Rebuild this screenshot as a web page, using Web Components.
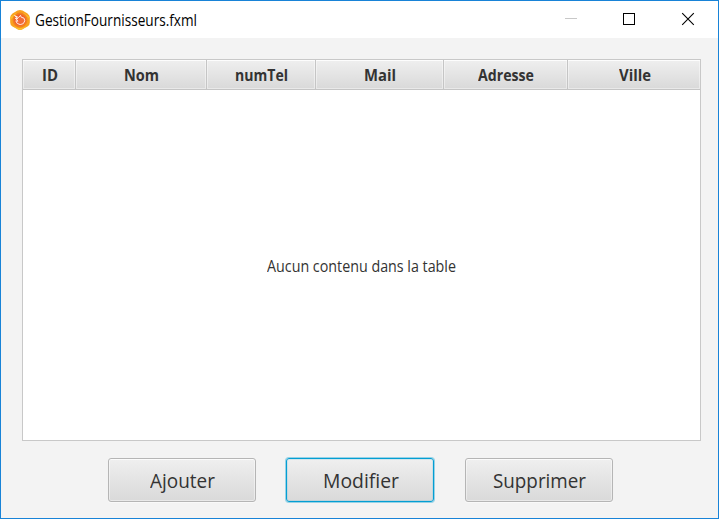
<!DOCTYPE html>
<html lang="fr">
<head>
<meta charset="utf-8">
<title>GestionFournisseurs.fxml</title>
<style>
html, body { margin: 0; height: 100%; overflow: hidden; }
body { font-family: "Open Sans", "Noto Sans", "Liberation Sans", sans-serif; font-size: 15px; color: #333; }
</style>
</head>
<body>
<app-window caption="GestionFournisseurs.fxml">
  <data-table placeholder="Aucun contenu dans la table">
    <table-column style="--w:53px" label="ID" fit="16"></table-column>
    <table-column style="--w:131px" label="Nom" fit="35"></table-column>
    <table-column style="--w:109px" label="numTel" fit="53"></table-column>
    <table-column style="--w:128px" label="Mail" fit="32"></table-column>
    <table-column style="--w:124px" label="Adresse" fit="56"></table-column>
    <table-column style="--w:132px" label="Ville" fit="32"></table-column>
  </data-table>
  <action-bar slot="actions">
    <push-button label="Ajouter" fit="65"></push-button>
    <push-button label="Modifier" fit="76" focused></push-button>
    <push-button label="Supprimer" fit="93"></push-button>
  </action-bar>
</app-window>
<script>
function define(name, html, ready) {
  customElements.define(name, class extends HTMLElement {
    connectedCallback() {
      if (this.shadowRoot) return;
      this.attachShadow({ mode: "open" }).innerHTML = html(this);
      if (ready) ready(this);
    }
  });
}

// Label whose glyphs are condensed to a given advance width.
define("fit-label", () => `<style>
:host { display: block; white-space: nowrap; }
span { display: inline-block; transform-origin: 0 50%; }
</style><span></span>`, el => {
  const span = el.shadowRoot.querySelector("span");
  span.textContent = el.getAttribute("text");
  const target = +el.getAttribute("width");
  const natural = span.getBoundingClientRect().width;
  el.style.width = target + "px";
  span.style.transform = `scaleX(${target / natural})`;
});

define("app-icon", () => `<style>:host { display: block; width: 20px; height: 20px; } svg { display: block; }</style>
<svg width="20" height="20" viewBox="0 0 20 20">
<path d="M7.5.6Q10-.6 12.5.6L17.5 3.6Q20 5.5 19.8 8V12Q20 15 17.5 16.6L12.5 19.3Q10 20.5 7.5 19.3L2.5 16.6Q0 15 .2 12V8Q0 5.5 2.5 3.6Z" fill="#f9a11d"/>
<path d="M.4 7L6 3L14 3L19.6 7V9L15 5H5L.4 10ZM3 16L8 18H12L17 16L12 19.4Q10 20.3 8 19.4Z" fill="#fbbd28"/>
<circle cx="10" cy="10" r="7.4" fill="#f4801f"/><circle cx="10" cy="10" r="5.8" fill="#f0602a"/>
<path d="M4.5 5.5L8.5 7.5L10.5 5.3L11.2 7.2Q15 7.3 14.8 10.8Q14 14.7 10.2 14.6Q6.3 14.2 5.8 10.8L8 11.2L5.2 8.2L8 8.8Z" fill="#f26a38" stroke="#ffe9df" stroke-width="1" stroke-linejoin="round"/>
</svg>`);

define("window-controls", () => `<style>
:host { display: flex; }
svg { display: block; }
</style>
<svg width="58" height="37" viewBox="0 0 58 37"><path d="M23 17.5h12" stroke="#c8c8c8"/></svg>
<svg width="58" height="37" viewBox="0 0 58 37"><rect x="23.5" y="12.5" width="11" height="11" fill="none" stroke="#000"/></svg>
<svg width="60" height="37" viewBox="0 0 60 37"><path d="M24.2 12.2L35.8 23.8M35.8 12.2L24.2 23.8" fill="none" stroke="#000" stroke-width="1.1"/></svg>`);

define("app-window", el => `<style>
:host { display: flex; flex-direction: column; box-sizing: border-box; width: 719px; height: 519px; border: 1px solid #1883d7; background: #f3f3f3; }
header { display: flex; align-items: center; height: 37px; flex: none; background: #fff; color: #000; padding-left: 9px; box-sizing: border-box; }
fit-label { margin-left: 5px; margin-right: auto; padding-top: 1px; font-size: 15.5px; }
main { padding: 21px 17px 0 21px; }
footer { padding: 17px 0 0 107px; }
</style>
<header><app-icon></app-icon><fit-label text="${el.getAttribute("caption")}" width="162"></fit-label><window-controls></window-controls></header>
<main><slot></slot></main><footer><slot name="actions"></slot></footer>`);

define("table-column", el => `<style>
:host { display: flex; justify-content: center; align-items: center; box-sizing: border-box; width: var(--w); height: 29px; font-weight: 700; font-size: 15.5px; padding-top: 1px; padding-left: 1px;
  border-right: 1px solid #c5c5c5; background: linear-gradient(#efefef, #d9d9d9); box-shadow: inset 0 0 0 1px rgba(255,255,255,.42), inset 0 1px #fbfbfb; }
:host(:last-child) { border-right: 0; }
</style><fit-label text="${el.getAttribute("label")}" width="${el.getAttribute("fit")}"></fit-label>`);

define("data-table", el => `<style>
:host { display: flex; flex-direction: column; box-sizing: border-box; width: 679px; height: 382px; border: 1px solid #c8c8c8; background: #fff; }
.head { display: flex; border-bottom: 1px solid #c5c5c5; }
.body { flex: 1; display: flex; align-items: center; justify-content: center; font-size: 15.5px; padding-top: 2px; }
</style><div class="head"><slot></slot></div>
<div class="body"><fit-label text="${el.getAttribute("placeholder")}" width="189"></fit-label></div>`);

define("action-bar", () => `<style>:host { display: grid; grid-template-columns: 178px 179px 148px; }</style><slot></slot>`);

define("push-button", el => `<style>
:host { display: block; }
button { display: flex; align-items: center; justify-content: center; width: 148px; height: 44px; box-sizing: border-box; padding: 0 0 1px 1px; margin: 0; border: 1px solid #b5b5b5; border-radius: 3px;
  font: inherit; font-size: 20.5px; color: #333; background: linear-gradient(#efefef, #d9d9d9); box-shadow: inset 0 0 0 1px rgba(255,255,255,.42), inset 0 1px #f8f8f8, 0 1px #f9f9f9; }
:host([focused]) button { border-color: #039ed3; box-shadow: inset 0 0 0 1px rgba(3,158,211,.12), 0 0 0 1px rgba(3,158,211,.38); }
</style><button type="button"><fit-label text="${el.getAttribute("label")}" width="${el.getAttribute("fit")}"></fit-label></button>`);
</script>
</body>
</html>
